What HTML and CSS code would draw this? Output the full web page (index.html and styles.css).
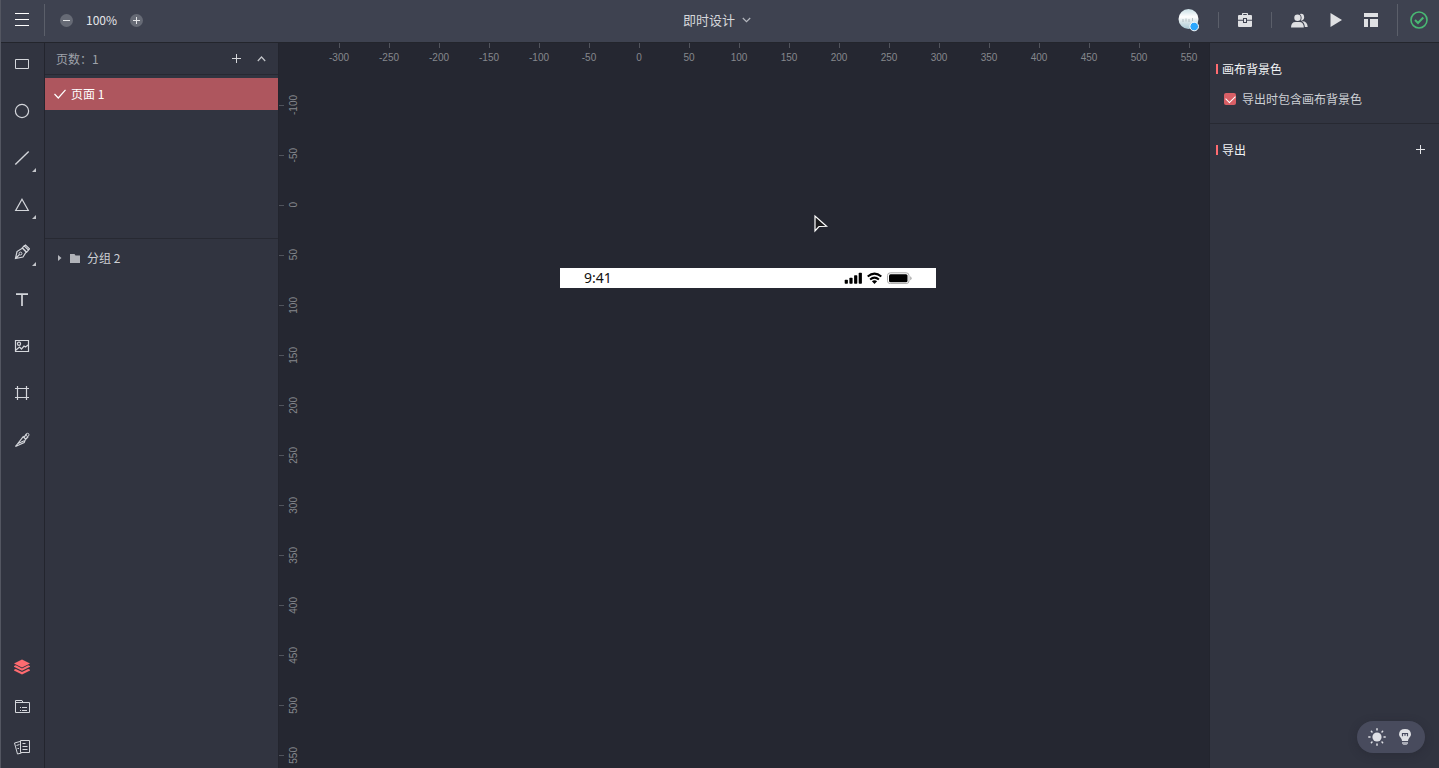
FILE: index.html
```html
<!DOCTYPE html>
<html lang="zh-CN">
<head>
<meta charset="utf-8">
<title>即时设计</title>
<link rel="stylesheet" href="styles.css">
</head>
<body>
<div class="app">
  <header class="topbar">
    <div class="topbar-left">
      <button class="icon-btn menu-btn" aria-label="菜单"><svg width="14" height="14" viewBox="0 0 14 14"><path d="M0 .5h14M0 6.500h14M0 12.500h14" stroke="#fff" fill="none"/></svg></button>
      <span class="rule rule-tall"></span>
      <div class="zoom">
        <button class="round-btn" aria-label="缩小"><svg width="13" height="13" viewBox="0 0 13 13"><circle cx="6.500" cy="6.500" r="6.500" fill="#666a75"/><path d="M3 6.500h7" stroke="#e4e5e8"/></svg></button>
        <span class="zoom-value">100%</span>
        <button class="round-btn" aria-label="放大"><svg width="13" height="13" viewBox="0 0 13 13"><circle cx="6.500" cy="6.500" r="6.500" fill="#666a75"/><path d="M3 6.500h7M6.500 3v7" stroke="#e4e5e8"/></svg></button>
      </div>
    </div>
    <button class="doc-title">即时设计<svg width="9" height="6" viewBox="0 0 9 6"><path d="M.8 1l3.700 3.700L8.200 1" stroke="#b5b8bf" stroke-width="1.200" fill="none"/></svg></button>
    <div class="topbar-right">
      <button class="icon-btn avatar" aria-label="账户"><svg width="22" height="24" viewBox="0 0 22 24"><defs><linearGradient id="sky" x1="0" y1="0" x2="0" y2="1"><stop offset="0" stop-color="#c9dfe6"/><stop offset=".4" stop-color="#fff"/><stop offset=".6" stop-color="#dce7ea"/><stop offset="1" stop-color="#a9c8d4"/></linearGradient></defs><circle cx="10.500" cy="11" r="10" fill="url(#sky)"/><path d="M5 11v3M8 10.500v3M11 11v3M14.500 10v3" stroke="#a4b3b8" stroke-width=".8"/><circle cx="16.200" cy="18.500" r="4.300" fill="#2aa7ff" stroke="#fff"/></svg></button>
      <span class="rule"></span>
      <button class="icon-btn" aria-label="工具箱"><svg width="14" height="14" viewBox="0 0 14 14"><path fill="#dfe0e3" fill-rule="evenodd" d="M4 2V.8Q4 0 4.800 0h4.400q.8 0 .8.8V2h3q1 0 1 1v3.700H9V5H5v1.700H0V3q0-1 1-1zM5.200 1v1h3.600V1zM0 7.700h5V10h4V7.700h5V13q0 1-1 1H1q-1 0-1-1zM6 6h2v3H6z"/></svg></button>
      <span class="rule"></span>
      <button class="icon-btn" aria-label="协作"><svg width="17" height="15" viewBox="0 0 17 15"><g fill="#dfe0e3"><circle cx="6.500" cy="4.800" r="3.200"/><path d="M0 14.600q0-5.700 4.500-5.700h3.800q4.500 0 4.500 5.700z"/><path d="M8.800.9q4.200-1 4.400 3.300-.2 3.400-3.500 3.500 2.200-3.700-.9-6.800zM10.800 8.300q5.600-.2 5.900 5.600h-2.800q-.5-4.200-3.100-5.600z"/></g></svg></button>
      <button class="icon-btn" aria-label="预览"><svg width="12" height="14" viewBox="0 0 12 14"><path d="M.5 0L12 7 .5 14z" fill="#dfe0e3"/></svg></button>
      <button class="icon-btn" aria-label="布局"><svg width="14" height="14" viewBox="0 0 14 14"><path d="M0 0h14v4H0zM0 6h4v8H0zM6 6h8v8H6z" fill="#dfe0e3"/></svg></button>
      <span class="rule rule-tall"></span>
      <button class="icon-btn" aria-label="已保存"><svg width="18" height="18" viewBox="0 0 18 18" fill="none" stroke="#49b873"><circle cx="9" cy="9" r="8" stroke-width="1.600"/><path d="M5 9l3 3 5.300-5.500" stroke-width="2"/></svg></button>
    </div>
  </header>

  <div class="workspace">
    <nav class="tools" aria-label="工具">
      <div class="tool-group">
        <button class="tool" aria-label="矩形"><svg width="16" height="16" viewBox="0 0 16 16"><path d="M1.500 3.500h13v9h-13z"/></svg></button>
        <button class="tool" aria-label="椭圆"><svg width="16" height="16" viewBox="0 0 16 16"><circle cx="8" cy="8" r="6.600" stroke-width="1.200"/></svg></button>
        <button class="tool more" aria-label="直线"><svg width="16" height="16" viewBox="0 0 16 16"><path d="M1.300 14.500l13.400-13" stroke-width="1.400"/></svg></button>
        <button class="tool more" aria-label="三角形"><svg width="16" height="16" viewBox="0 0 16 16"><path d="M8 2.300l6.300 11.200H1.700z" stroke-width="1.200"/></svg></button>
        <button class="tool more" aria-label="钢笔"><svg width="16" height="16" viewBox="0 0 16 16"><path stroke-width="1.200" d="M1.500 14.500L3 7.500l5.300-3.300 3.800 3.800L9 13zM1.500 14.500l4-4M8.300 3.800l1.800-1.900 4.400 4.200-1.800 2zM10.300 1.900l1.200-.9 4 3.800-1 1"/><circle cx="6.500" cy="9.500" r="1.400"/></svg></button>
        <button class="tool" aria-label="文本"><svg width="16" height="16" viewBox="0 0 16 16"><path d="M2 3.200h12M8 3v12" stroke-width="1.700"/></svg></button>
        <button class="tool" aria-label="图片"><svg width="16" height="16" viewBox="0 0 16 16"><path stroke-width="1.200" d="M1.500 2.500h13v11h-13zM2 12l3.500-3 2 2 2.500-3 1.500 1L14 7"/><circle cx="5" cy="5.800" r="1.600" stroke-width="1.200"/></svg></button>
        <button class="tool" aria-label="画板"><svg width="16" height="16" viewBox="0 0 16 16"><path stroke-width="1.200" d="M3.500 1v14M12.500 1v14M1 3.500h14M1 12.500h14"/></svg></button>
        <button class="tool" aria-label="切图"><svg width="16" height="16" viewBox="0 0 16 16"><path stroke-width="1.200" d="M1.500 14.500l7.700-9.800 2.400 2.300-1.400 3.600zM4 11.500l6.300-2.700M10 5.300l2.500-3.400M12 7l2.200-2.500"/><circle cx="13.500" cy="2.800" r="1.500"/></svg></button>
      </div>
      <div class="tool-group">
        <button class="tool" aria-label="图层"><svg width="16" height="16" viewBox="0 0 16 16"><g fill="#ff6b70" stroke="none"><path d="M8 .5l8 4-8 4-8-4z"/><path d="M0 7l1.800-.8L8 9.500l6.200-3.300L16 7v.8l-8 4-8-4z"/><path d="M0 10.700l1.800-.8L8 13.100l6.200-3.200 1.800.8v.8l-8 4-8-4z"/></g></svg></button>
        <button class="tool" aria-label="组件"><svg width="16" height="16" viewBox="0 0 16 16"><path d="M1.500 13.500v-12H8l1 2h6.500v10H1.500M1.500 3.500H9M6 8.500h1M8 8.500h5M6 11.500h1M8 11.500h5"/></svg></button>
        <button class="tool" aria-label="素材"><svg width="16" height="16" viewBox="0 0 16 16"><path d="M6.500 1.500h9v12h-9zM8.500 4.500h3M8.500 7.500h5M8.500 10.500h5M6 2.500L.5 4l3 11 4-1M2.500 6.500l3-1M3.500 9.500h1.500"/></svg></button>
      </div>
    </nav>

    <aside class="sidebar">
      <section class="pages">
        <header class="pages-head">
          <span class="pages-count">页数：1</span>
          <button class="icon-btn" aria-label="新建页面"><svg width="9" height="9" viewBox="0 0 9 9"><path d="M0 4.500h9M4.500 0v9" stroke="#d5d6da"/></svg></button>
          <button class="icon-btn" aria-label="收起"><svg width="9" height="6" viewBox="0 0 9 6"><path d="M.8 5l3.700-4 3.700 4" stroke="#c3c5ca" stroke-width="1.200" fill="none"/></svg></button>
        </header>
        <button class="page-item"><svg width="12" height="10" viewBox="0 0 12 10"><path d="M.5 5l3.800 4L11.500.8" stroke="#fff" stroke-width="1.200" fill="none"/></svg>页面 1</button>
      </section>
      <section class="layers">
        <button class="layer-item"><svg class="caret" width="4" height="6" viewBox="0 0 4 6"><path d="M0 0l3.500 3L0 6z" fill="#b5b7bd"/></svg><svg width="10" height="9" viewBox="0 0 10 9"><path d="M0 0h4.500l1 1.500H10V9H0z" fill="#b1b3b9"/></svg>分组 2</button>
      </section>
    </aside>

    <main class="canvas">
      <div class="ruler-x">
        <span>-300</span><span>-250</span><span>-200</span><span>-150</span><span>-100</span><span>-50</span><span>0</span><span>50</span><span>100</span><span>150</span><span>200</span><span>250</span><span>300</span><span>350</span><span>400</span><span>450</span><span>500</span><span>550</span>
      </div>
      <div class="ruler-y">
        <span><b>-100</b></span><span><b>-50</b></span><span><b>0</b></span><span><b>50</b></span><span><b>100</b></span><span><b>150</b></span><span><b>200</b></span><span><b>250</b></span><span><b>300</b></span><span><b>350</b></span><span><b>400</b></span><span><b>450</b></span><span><b>500</b></span><span><b>550</b></span>
      </div>
      <div class="artboard">
        <span class="clock">9:41</span>
        <svg width="18" height="12" viewBox="0 0 18 12"><g fill="#000"><rect x=".7" y="7.800" width="3.200" height="4" rx=".7"/><rect x="5.400" y="5.800" width="3.200" height="6" rx=".7"/><rect x="10.100" y="3.300" width="3.200" height="8.500" rx=".7"/><rect x="14.700" y=".8" width="3.200" height="11" rx=".7"/></g></svg>
        <svg width="15" height="12" viewBox="0 0 15 12"><path d="M.7 4.600q6.800-6 13.600 0M3.100 7.400q4.400-3.600 8.800 0" fill="none" stroke="#000" stroke-width="2"/><path d="M4.900 9.200q2.600-2 5.200 0L7.500 12z"/></svg>
        <svg width="25" height="12" viewBox="0 0 25 12"><rect x=".5" y=".8" width="21.500" height="10.800" rx="2.800" fill="none" stroke="#aaa"/><rect x="2" y="2.200" width="18.500" height="8" rx="1.500"/><path d="M23.200 4.200q1.400.6 1.400 2t-1.400 2z" fill="#aaa"/></svg>
      </div>
      <svg class="pointer" width="16" height="20" viewBox="0 0 16 20"><path d="M2 2v15l4-4.500 7.500-.2z" fill="#1b1b1d" stroke="#fff" stroke-width="1.200"/></svg>
    </main>

    <aside class="inspector">
      <section class="panel">
        <h2 class="panel-title">画布背景色</h2>
        <label class="check"><input type="checkbox" checked>导出时包含画布背景色</label>
      </section>
      <section class="panel panel-row">
        <h2 class="panel-title">导出</h2>
        <button class="icon-btn" aria-label="添加导出"><svg width="9" height="10" viewBox="0 0 9 10"><path d="M0 4.500h9M4.500 0v9" stroke="#e4e5e8"/></svg></button>
      </section>
      <div class="mode-switch">
        <button class="icon-btn" aria-label="浅色模式"><svg width="18" height="18" viewBox="0 0 18 18"><circle cx="9" cy="9" r="4.600" fill="#dfe0e5"/><path d="M9 .8v1.200M9 16v1.200M.8 9h1.200M16 9h1.200M3.400 3.400l.6.6M14 14l.6.6M3.400 14.600l.6-.6M14 4l.6-.6" stroke="#dfe0e5" stroke-width="1.500" stroke-linecap="round"/></svg></button>
        <button class="icon-btn" aria-label="提示"><svg width="12" height="18" viewBox="0 0 12 18"><path d="M3 13q0-1.800-1.500-3.500Q0 8 0 6.300 .3 1 6 1t6 5.300q0 1.700-1.500 3.200Q9 11.200 9 13z" fill="#dfe0e5"/><path d="M3.500 8.200V5.500h5v2.700M6 5.500v2.200" fill="none" stroke="#484b60" stroke-width="1.200"/><path d="M3 14h6v1.500L7.500 17h-3L3 15.500z" fill="#a9abb5"/></svg></button>
      </div>
    </aside>
  </div>
</div>
</body>
</html>
```
FILE: styles.css
```css
* { box-sizing: border-box; }

body {
  margin: 0;
  font: 12px/20px "Noto Sans CJK SC", "Noto Sans", sans-serif;
  color: #cdcfd4;
  background: #252731;
}

button {
  margin: 0;
  padding: 0;
  border: 0;
  background: none;
  color: inherit;
  font: inherit;
  cursor: pointer;
}

svg { display: block; flex: none; }

.app {
  display: flex;
  flex-direction: column;
  height: 100vh;
  overflow: hidden;
  border-left: 1px solid #535661;
}

.icon-btn, .round-btn {
  display: flex;
  align-items: center;
  justify-content: center;
}

/* Top bar */
.topbar {
  display: grid;
  grid-template-columns: 1fr auto 1fr;
  align-items: center;
  height: 43px;
  padding-bottom: 2px;
  background: #3e4250;
  border-bottom: 1px solid #23252c;
}

.topbar-left, .topbar-right, .zoom { display: flex; align-items: center; }
.topbar-right { justify-content: flex-end; padding-right: 11px; }
.menu-btn { width: 43px; height: 40px; padding-right: 2px; }
.rule { width: 1px; height: 16px; background: #5b5f6a; }
.rule-tall { height: 32px; }
.zoom { gap: 13px; padding-left: 15px; }
.zoom-value { color: #e4e5e8; }

.doc-title {
  display: flex;
  align-items: center;
  gap: 7px;
  padding-right: 6px;
  font-size: 13px;
  color: #d5d7db;
}

.topbar-right .rule { margin: 0 19px; }
.topbar-right .avatar + .rule { margin: 0 19px 0 18px; }
.topbar-right .rule-tall { margin: 0 12px 0 19px; }
.topbar-right .icon-btn + .icon-btn { margin-left: 22px; }

/* Workspace */
.workspace {
  display: grid;
  grid-template-columns: 44px 234px 1fr 230px;
  flex: 1;
  min-height: 0;
}

.tools {
  display: flex;
  flex-direction: column;
  justify-content: space-between;
  padding: 1px 2px 1px 0;
  background: #313440;
  border-right: 1px solid #23252e;
}

.tool-group { display: flex; flex-direction: column; }
.tool-group:first-child { gap: 7px; }

.tool {
  position: relative;
  display: flex;
  align-items: center;
  justify-content: center;
  height: 40px;
}

.tool svg { fill: none; stroke: #d4d6db; }

.tool.more::after {
  content: "";
  position: absolute;
  right: 6px;
  bottom: 6px;
  border: 2px solid;
  border-color: transparent #c3c5ca #c3c5ca transparent;
}

.sidebar {
  background: #313440;
  border-right: 1px solid #23252e;
}

.pages { height: 196px; border-bottom: 1px solid #272932; }

.pages-head {
  display: flex;
  align-items: center;
  gap: 16px;
  height: 32px;
  margin-bottom: 3px;
  padding: 0 12px 0 11px;
  border-bottom: 1px solid #272932;
}

.pages-count { flex: 1; color: #9fa2aa; }

.page-item {
  display: flex;
  align-items: center;
  gap: 5px;
  width: 100%;
  height: 32px;
  padding-left: 9px;
  background: #ae565e;
  color: #fff;
}

.layer-item {
  display: flex;
  align-items: center;
  gap: 7px;
  width: 100%;
  height: 38px;
  padding-left: 13px;
}

.caret { margin-right: 1px; }

/* Canvas and rulers */
.canvas {
  position: relative;
  overflow: hidden;
  background: #252731;
  color: #85878d;
  font: 10px/12px "Liberation Sans", sans-serif;
}

.ruler-x { display: flex; padding-left: 35px; }

.ruler-x span {
  display: flex;
  flex: none;
  flex-direction: column;
  align-items: center;
  gap: 4px;
  width: 50px;
}

.ruler-x span::before {
  content: "";
  width: 1px;
  height: 5px;
  background: #50535c;
}

.ruler-y { padding-top: 16px; }

.ruler-y span {
  display: flex;
  align-items: center;
  gap: 4px;
  height: 50px;
}

.ruler-y span::before {
  content: "";
  width: 5px;
  height: 1px;
  background: #50535c;
}

.ruler-y b {
  font-weight: normal;
  writing-mode: vertical-rl;
  transform: rotate(180deg);
}

.artboard {
  position: absolute;
  left: 281px;
  top: 225px;
  display: flex;
  align-items: center;
  gap: 5px;
  width: 376px;
  height: 20px;
  padding: 0 24px;
  background: #fff;
}

.clock {
  flex: 1;
  color: #111;
  font: 14px/20px "Noto Sans", sans-serif;
}

.pointer {
  position: absolute;
  left: 534px;
  top: 171px;
}

/* Inspector */
.inspector {
  position: relative;
  background: #313440;
  border-left: 1px solid #23252e;
}

.panel {
  padding: 16px 14px 14px 6px;
  border-bottom: 1px solid #272932;
}

.panel-row {
  display: flex;
  align-items: center;
  justify-content: space-between;
  border-bottom: 0;
}

.panel-title {
  display: flex;
  align-items: center;
  gap: 4px;
  margin: 0;
  font-size: 12px;
  font-weight: normal;
  color: #f2f3f5;
}

.panel-title::before {
  content: "";
  width: 2px;
  height: 10px;
  background: #ff6b70;
}

.check {
  display: flex;
  align-items: center;
  gap: 6px;
  margin-top: 10px;
  padding-left: 8px;
}

.check input {
  appearance: none;
  display: grid;
  place-items: center;
  width: 12px;
  height: 12px;
  margin: 0;
  border-radius: 2px;
  background: #d95f66;
}

.check input:checked::before {
  content: "";
  width: 8px;
  height: 5px;
  border: solid #fff;
  border-width: 0 0 1px 1px;
  transform: translateY(-1px) rotate(-45deg);
}

.mode-switch {
  position: absolute;
  right: 14px;
  bottom: 15px;
  display: flex;
  align-items: center;
  justify-content: center;
  gap: 13px;
  width: 68px;
  height: 32px;
  padding-right: 4px;
  border-radius: 16px;
  background: #484b5d;
  box-shadow: 0 2px 8px #22242e66;
}
```
